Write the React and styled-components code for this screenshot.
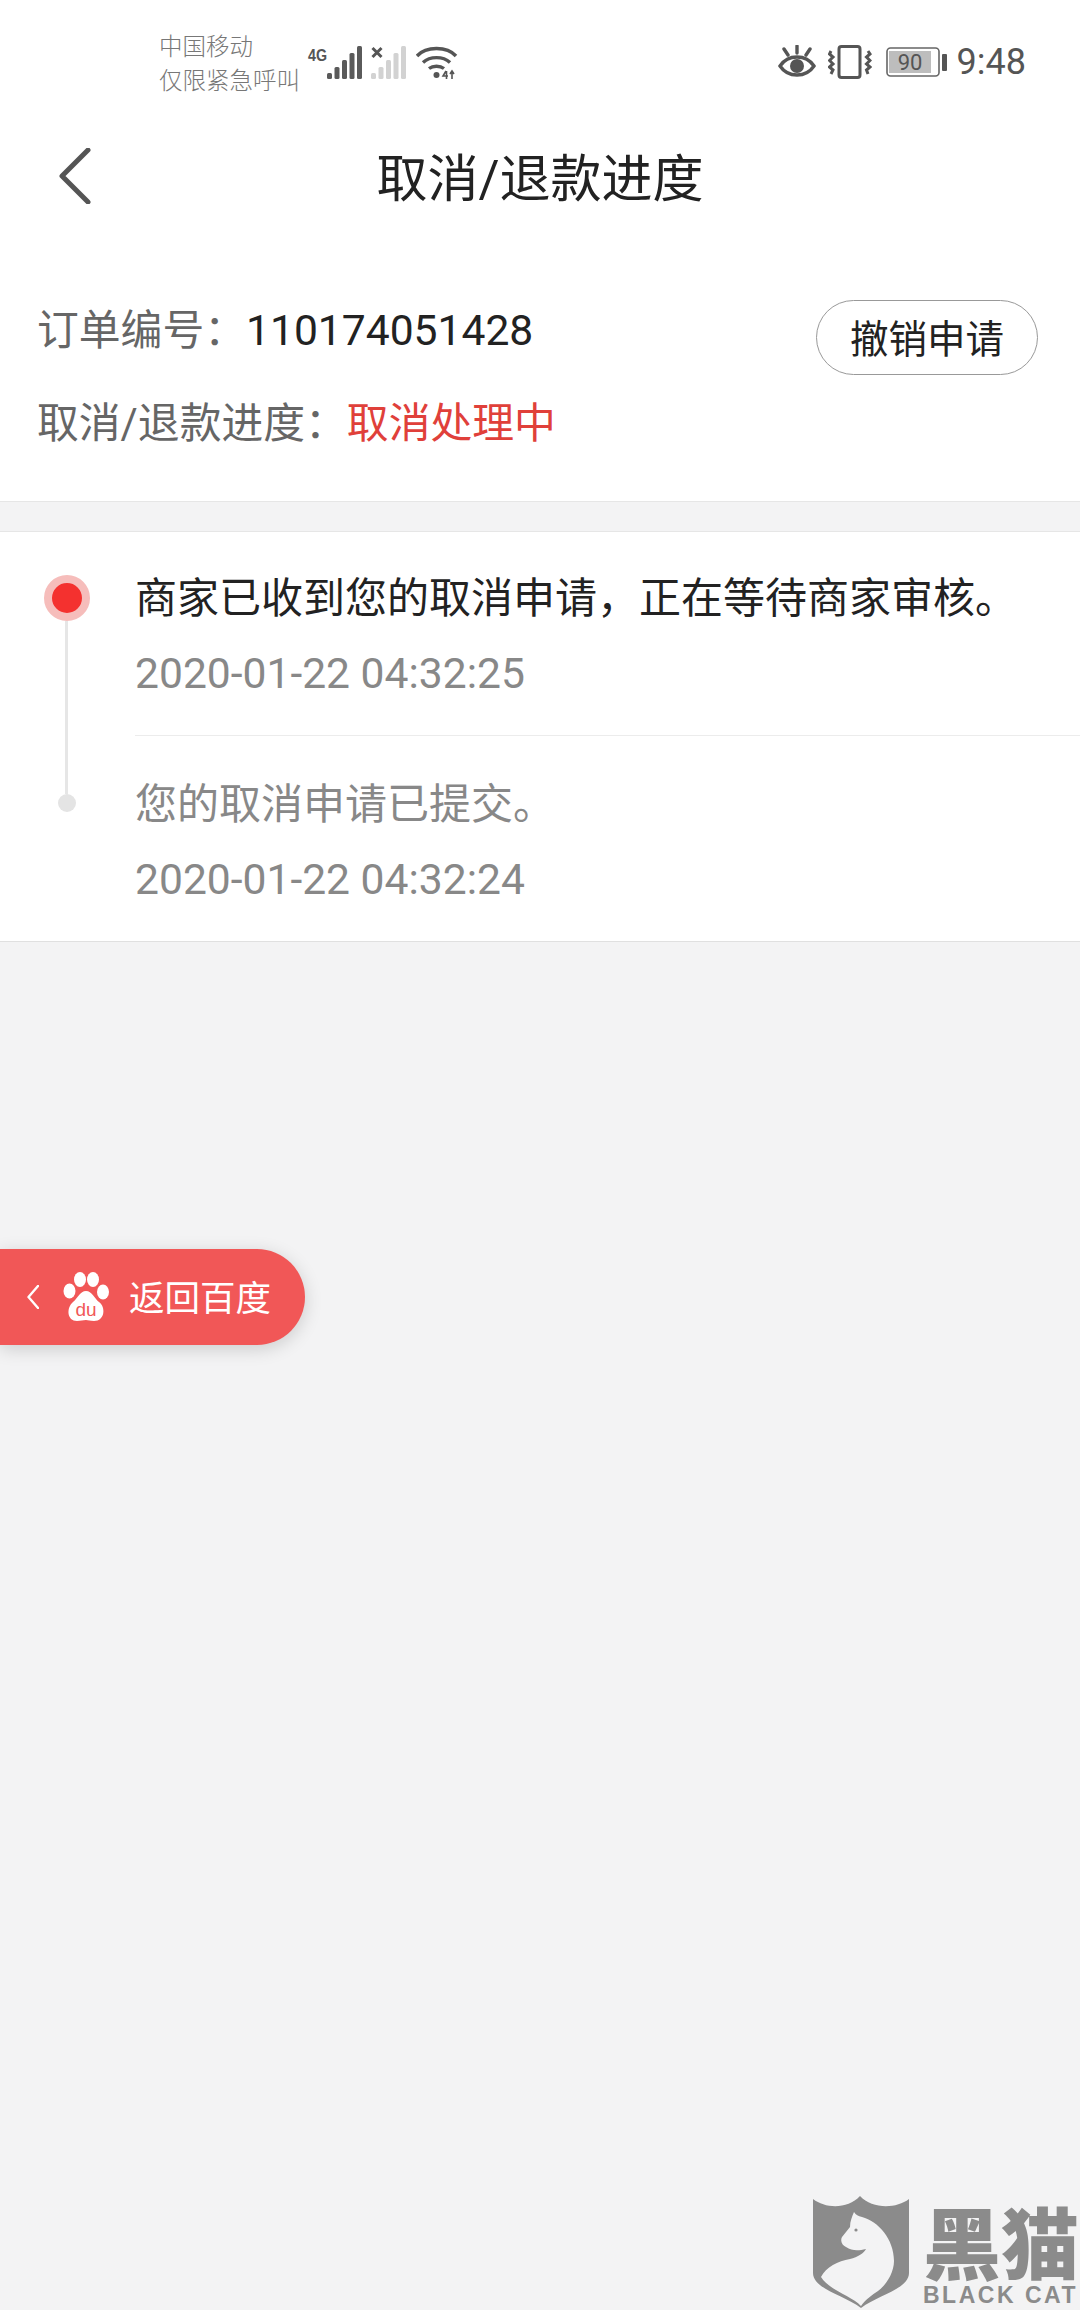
import React from "react";
import styled, { createGlobalStyle } from "styled-components";

const Global = createGlobalStyle`
  html, body { margin: 0; padding: 0; background: #f3f3f4; }
  body { font-family: Roboto, "Noto Sans CJK SC", sans-serif; }
  * { box-sizing: border-box; }
`;

const Page = styled.div`
  position: relative;
  width: 1080px;
  height: 2310px;
  overflow: hidden;
  background: #f3f3f4;
`;

const Top = styled.div`
  background: #fff;
`;

const StatusBar = styled.div`
  display: flex;
  align-items: center;
  height: 122px;
  padding: 0 54px 0 159px;
  color: #666;
`;

const Carrier = styled.div`
  font-size: 23.5px;
  line-height: 34px;
  width: 147px;
  margin-top: 6px;
  color: #777;
  font-weight: 300;
`;

const NetIcons = styled.div`
  display: flex;
  align-items: flex-start;
  gap: 9px;
  margin-top: 3px;
`;

const SysIcons = styled.div`
  display: flex;
  align-items: center;
  margin-left: auto;
  margin-top: 2px;
`;

const Clock = styled.span`
  font-size: 36px;
  line-height: 40px;
  color: #555;
  margin-left: 9px;
`;

const Header = styled.header`
  position: relative;
  display: flex;
  align-items: center;
  justify-content: center;
  height: 110px;
`;

const BackIcon = styled.svg`
  position: absolute;
  left: 59px;
  top: 26px;
`;

const Title = styled.h1`
  margin: -5px 0 0;
  font-size: 51px;
  font-weight: 400;
  color: #222;
`;

const Info = styled.section`
  display: flex;
  align-items: flex-start;
  justify-content: space-between;
  padding: 52px 42px 31px 37px;
  background: #fff;
  border-bottom: 1px solid #e6e6e6;
`;

const InfoRow = styled.div`
  font-size: 41.8px;
  line-height: 93px;
  height: 93px;
  color: #666;
  white-space: nowrap;
`;

const Value = styled.span`
  color: ${(p) => p.$color};
  font-size: ${(p) => p.$size || 41.8}px;
`;

const CancelButton = styled.div`
  display: flex;
  align-items: center;
  justify-content: center;
  width: 222px;
  height: 75px;
  margin-top: 16px;
  padding-bottom: 4px;
  border: 1.5px solid #999;
  border-radius: 38px;
  font-size: 38.5px;
  color: #222;
  background: #fff;
`;

const Timeline = styled.section`
  margin-top: 29px;
  background: #fff;
  border-top: 1px solid #e6e6e6;
  border-bottom: 1px solid #e0e0e0;
`;

const Item = styled.div`
  display: flex;
`;

const Rail = styled.div`
  display: flex;
  flex-direction: column;
  align-items: center;
  flex: none;
  width: 135px;
  padding: ${(p) => (p.$first ? "43px" : "0")} 2px 0 0;
`;

const RailLine = styled.div`
  width: 3px;
  background: #e6e6e6;
  ${(p) => (p.$grow ? "flex: 1;" : "height: 58px;")}
`;

const ActiveDot = styled.div`
  flex: none;
  width: 46px;
  height: 46px;
  border-radius: 50%;
  border: 8px solid #f6bdbb;
  background: #f4312f;
`;

const SmallDot = styled.div`
  flex: none;
  width: 18px;
  height: 18px;
  border-radius: 50%;
  background: #e4e4e4;
`;

const Body = styled.div`
  flex: 1;
  min-width: 0;
  padding: ${(p) => (p.$first ? "37px 0 32px" : "39px 0 32px")};
  border-bottom: ${(p) => (p.$first ? "1px solid #ececec" : "none")};
`;

const ItemTitle = styled.div`
  font-size: 42px;
  line-height: 60px;
  white-space: nowrap;
  color: ${(p) => (p.$active ? "#222" : "#888")};
`;

const ItemTime = styled.div`
  margin-top: 14px;
  font-size: 42.6px;
  line-height: 60px;
  color: #888;
`;

const FloatBack = styled.div`
  position: absolute;
  left: 0;
  top: 1249px;
  display: flex;
  align-items: center;
  width: 305px;
  height: 96px;
  padding-left: 27px;
  border-radius: 0 48px 48px 0;
  background: #f15757;
  box-shadow: 0 4px 18px rgba(0, 0, 0, 0.16);
  color: #fff;
`;

const FloatLabel = styled.span`
  margin-left: 20px;
  margin-top: -3px;
  font-size: 35.5px;
`;

const Watermark = styled.div`
  position: absolute;
  left: 812px;
  top: 2195px;
  display: flex;
  gap: 13px;
  width: 268px;
  color: #8b8b8b;
`;

const MarkText = styled.div`
  display: flex;
  flex-direction: column;
  flex: none;
`;

const MarkCn = styled.div`
  font-family: "Noto Sans CJK SC", sans-serif;
  font-weight: 900;
  font-size: 78px;
  line-height: 78px;
  margin-top: 6px;
  white-space: nowrap;
`;

const MarkEn = styled.div`
  font-family: "Liberation Sans", sans-serif;
  font-weight: 700;
  font-size: 23px;
  line-height: 24px;
  letter-spacing: 2.5px;
  margin-top: 4px;
  white-space: nowrap;
`;

const Bars = ({ color }) => (
  <>
    <rect x="0" y="27" width="5" height="6" rx="1.5" fill={color} />
    <rect x="7.5" y="21" width="5" height="12" rx="1.5" fill={color} />
    <rect x="15" y="14" width="5" height="19" rx="1.5" fill={color} />
    <rect x="22.5" y="7" width="5" height="26" rx="1.5" fill={color} />
    <rect x="30" y="0" width="5" height="33" rx="1.5" fill={color} />
  </>
);

const Signal4G = () => (
  <svg width="56" height="34" viewBox="0 0 56 34">
    <text x="2" y="15" fontFamily="'Liberation Sans Narrow', 'Liberation Sans', sans-serif" fontWeight="700" fontSize="17" fill="#555" textLength="19" lengthAdjust="spacingAndGlyphs">4G</text>
    <g transform="translate(21 0)"><Bars color="#5a5a5a" /></g>
  </svg>
);

const SignalOff = () => (
  <svg width="36" height="34" viewBox="0 0 36 34">
    <Bars color="#d2d2d2" />
    <rect x="0" y="0" width="13" height="15" fill="#fff" />
    <path d="M1.5 2 L10.5 11 M10.5 2 L1.5 11" stroke="#555" strokeWidth="3" />
  </svg>
);

const Wifi = () => (
  <svg width="42" height="34" viewBox="0 0 42 34" fill="none" stroke="#555" strokeWidth="3.4">
    <path d="M1 10 C10 0 31 0 40 10" />
    <path d="M7 16.5 C14 10 27 10 34 16.5" />
    <path d="M13 22.5 C17 19.5 24 19.5 28 22.5" />
    <circle cx="20.5" cy="29" r="3" fill="#555" stroke="none" />
    <path d="M30 25 L27 30 H32 M30.5 25 V33 M36 33 V25 M34 28 L36 25 L38 28" strokeWidth="1.6" />
  </svg>
);

const Eye = () => (
  <svg width="38" height="34" viewBox="0 0 38 34" fill="none" stroke="#555" strokeWidth="3.4">
    <path d="M2 21 C10 9 28 9 36 21 C28 33 10 33 2 21 Z" />
    <circle cx="19" cy="21" r="7" fill="#555" stroke="none" />
    <path d="M19 1 V8 M6 4 L10 10 M32 4 L28 10" strokeLinecap="round" />
  </svg>
);

const Vibrate = () => (
  <svg width="44" height="34" viewBox="0 0 44 34" fill="none" stroke="#555" strokeWidth="3" style={{ marginLeft: 12 }}>
    <rect x="11" y="1.5" width="21" height="31" rx="2.5" />
    <path d="M3 6 L1.5 9 L5 12 L1.5 15.5 L5 19 L1.5 22 L5 25 L3 29" />
    <path d="M40 6 L42 9 L38.5 12 L42 15.5 L38.5 19 L42 22 L38.5 25 L40 29" />
  </svg>
);

const Battery = () => (
  <svg width="62" height="30" viewBox="0 0 62 30" style={{ marginLeft: 14 }}>
    <rect x="1" y="1" width="52" height="28" rx="3.5" fill="#fff" stroke="#666" strokeWidth="1.6" />
    <rect x="3" y="4" width="42" height="22" fill="#bdbdbd" />
    <rect x="56" y="7" width="5" height="17" rx="1" fill="#555" />
    <text x="24" y="23" textAnchor="middle" fontFamily="Roboto, sans-serif" fontSize="22" fill="#555">90</text>
  </svg>
);

const Paw = () => (
  <svg width="46" height="50" viewBox="0 0 46 50" style={{ marginLeft: 24 }}>
    <ellipse cx="6.5" cy="19" rx="6" ry="7.5" fill="#fff" />
    <ellipse cx="17" cy="7.5" rx="6" ry="7.5" fill="#fff" />
    <ellipse cx="30" cy="7.5" rx="6" ry="7.5" fill="#fff" />
    <ellipse cx="40" cy="20" rx="6" ry="7.5" fill="#fff" />
    <path d="M23 19 C29 19 31 26 36 30 C43 35 42 49 31 49 C27 49 25 48 23 48 C20 48 18 49 14 49 C4 49 3 36 10 30 C15 26 17 19 23 19 Z" fill="#fff" />
    <text x="23" y="44" textAnchor="middle" fontFamily="'Liberation Sans', sans-serif" fontSize="19" fill="#f15757">du</text>
  </svg>
);

const Shield = () => (
  <svg width="98" height="114" viewBox="0 0 98 114">
    <path d="M1 4 C14 14 36 14 48 1 C60 14 84 14 97 4 V78 C97 94 66 100 49 113 C32 100 1 94 1 78 Z" fill="#8b8b8b" />
    <path d="M42 17 C44 20 46 21 50 22 C66 26 82 44 82 66 C82 78 74 90 66 96 C60 100 54 104 49 111 C40 101 18 96 9 82 C14 72 26 66 38 64 C46 62 52 58 54 54 C46 56 40 56 34 52 C30 50 28 46 30 42 L38 32 C38 26 40 22 42 17 Z" fill="#f3f3f4" />
    <circle cx="44" cy="35" r="1.6" fill="#8b8b8b" />
  </svg>
);

export default function App() {
  return (
    <Page>
      <Global />
      <Top>
        <StatusBar>
          <Carrier>
            中国移动
            <br />
            仅限紧急呼叫
          </Carrier>
          <NetIcons>
            <Signal4G />
            <SignalOff />
            <Wifi />
          </NetIcons>
          <SysIcons>
            <Eye />
            <Vibrate />
            <Battery />
            <Clock>9:48</Clock>
          </SysIcons>
        </StatusBar>
        <Header>
          <BackIcon width="32" height="56" viewBox="0 0 32 56" fill="none" stroke="#555" strokeWidth="5" strokeLinecap="round" strokeLinejoin="round">
            <path d="M29 2 L3 28 L29 54" />
          </BackIcon>
          <Title>取消/退款进度</Title>
        </Header>
      </Top>
      <Info>
        <div>
          <InfoRow>
            {"订单编号\uFF1A"}<Value $color="#222" $size={42.6}>110174051428</Value>
          </InfoRow>
          <InfoRow>
            {"取消/退款进度\uFF1A"}<Value $color="#e0403a">取消处理中</Value>
          </InfoRow>
        </div>
        <CancelButton>撤销申请</CancelButton>
      </Info>
      <Timeline>
        <Item>
          <Rail $first>
            <ActiveDot />
            <RailLine $grow />
          </Rail>
          <Body $first>
            <ItemTitle $active>{"商家已收到您的取消申请\uFF0C正在等待商家审核\u3002"}</ItemTitle>
            <ItemTime>2020-01-22 04:32:25</ItemTime>
          </Body>
        </Item>
        <Item>
          <Rail>
            <RailLine />
            <SmallDot />
          </Rail>
          <Body>
            <ItemTitle>{"您的取消申请已提交\u3002"}</ItemTitle>
            <ItemTime>2020-01-22 04:32:24</ItemTime>
          </Body>
        </Item>
      </Timeline>
      <FloatBack>
        <svg width="12" height="24" viewBox="0 0 12 24" fill="none" stroke="#fff" strokeWidth="2.4" strokeLinecap="round" strokeLinejoin="round">
          <path d="M11 1 L1.5 12 L11 23" />
        </svg>
        <Paw />
        <FloatLabel>返回百度</FloatLabel>
      </FloatBack>
      <Watermark>
        <Shield />
        <MarkText>
          <MarkCn>黑猫</MarkCn>
          <MarkEn>BLACK CAT</MarkEn>
        </MarkText>
      </Watermark>
    </Page>
  );
}
